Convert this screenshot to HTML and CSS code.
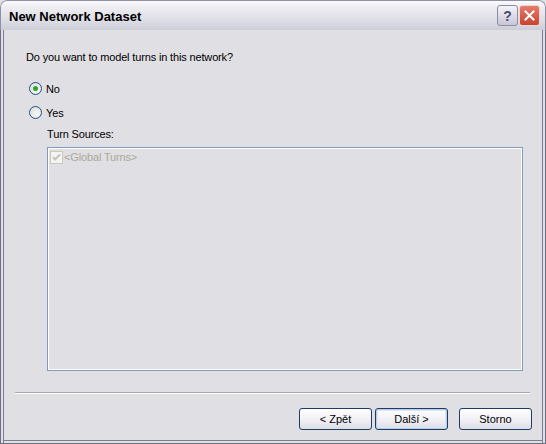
FILE: index.html
```html
<!DOCTYPE html>
<html lang="cs">
<head>
    <meta charset="UTF-8">
    <title>New Network Dataset</title>
    <link rel="stylesheet" href="styles.css">
</head>
<body>
    <div class="window">
        <div class="titlebar">
            <span class="title">New Network Dataset</span>
            <div class="caption-buttons">
                <span class="cap-btn help">?</span>
                <span class="cap-btn close">
                    <svg width="11" height="11" viewBox="0 0 11 11">
                        <path d="M1.5 1.5 L9.5 9.5 M9.5 1.5 L1.5 9.5" stroke="#fff" stroke-width="2" stroke-linecap="square"/>
                    </svg>
                </span>
            </div>
        </div>
        <div class="client">
            <p class="question">Do you want to model turns in this network?</p>

            <label class="radio"><span class="radio-box checked"></span>No</label>
            <label class="radio"><span class="radio-box"></span>Yes</label>

            <div class="sources">
                <div class="sources-label">Turn Sources:</div>
                <div class="listbox">
                    <div class="list-item">
                        <span class="check">
                            <svg width="11" height="11" viewBox="0 0 11 11">
                                <path d="M2 5 L4 7.5 L9 2.5" fill="none" stroke="#c6c4b8" stroke-width="2"/>
                            </svg>
                        </span>
                        &lt;Global Turns&gt;
                    </div>
                </div>
            </div>

            <div class="separator"></div>

            <div class="buttons">
                <button type="button" class="btn">&lt; Zpět</button>
                <button type="button" class="btn default">Další &gt;</button>
                <button type="button" class="btn cancel">Storno</button>
            </div>
        </div>
    </div>
</body>
</html>
```

FILE: styles.css
```css
html, body {
    margin: 0;
    padding: 0;
    background: #e0dfe3;
}
.window {
    width: 546px;
    height: 444px;
    box-sizing: border-box;
    display: flex;
    flex-direction: column;
    font-family: "Liberation Sans", Arial, sans-serif;
    font-size: 11px;
    letter-spacing: -0.15px;
    color: #000;
    border-radius: 7px 7px 0 0;
    overflow: hidden;
    background: #e0dfe3;
}
.titlebar {
    height: 30px;
    box-sizing: border-box;
    display: flex;
    align-items: flex-start;
    justify-content: space-between;
    padding: 0 5px 0 8px;
    border: 1px solid #8f8fa6;
    border-bottom: none;
    border-radius: 7px 7px 0 0;
    background: linear-gradient(#fbfbfd, #ececf1 25%, #dcdce4 70%, #cdcdd8);
}
.title {
    margin-top: 8px;
    font-weight: bold;
    font-size: 13px;
    letter-spacing: 0;
    color: #000;
}
.caption-buttons {
    display: flex;
    gap: 1px;
    margin-top: 4px;
}
.cap-btn {
    width: 21px;
    height: 21px;
    box-sizing: border-box;
    border-radius: 3px;
    display: flex;
    align-items: center;
    justify-content: center;
}
.help {
    border: 1px solid #8c8ca4;
    background: linear-gradient(#f4f4f8, #c6c6d8);
    color: #4a4a68;
    font-size: 14px;
    font-weight: bold;
}
.close {
    border: 1px solid #f0d4cf;
    background: linear-gradient(#e77b6c, #c8432f);
}
.client {
    flex: 1;
    display: flex;
    flex-direction: column;
    border-left: 1px solid #6d6d88;
    border-right: 1px solid #6d6d88;
    border-bottom: 1px solid #6d6d88;
    box-shadow: inset 2px 0 0 #e0dfe3, inset 3px 0 0 #7c7c96,
                inset -2px 0 0 #e0dfe3, inset -3px 0 0 #7c7c96,
                inset 0 -2px 0 #e0dfe3, inset 0 -3px 0 #7c7c96;
    padding: 21px 3px 3px 25px;
}
.question {
    margin: 0 0 18px;
    line-height: 13px;
}
.radio {
    display: flex;
    align-items: center;
    gap: 4px;
    height: 13px;
    margin: 0 0 11px 3px;
}
.radio-box {
    width: 13px;
    height: 13px;
    box-sizing: border-box;
    border: 1px solid #1c5180;
    border-radius: 50%;
    background: radial-gradient(circle at 65% 65%, #f6f6f6, #dcdcd6);
    display: flex;
    align-items: center;
    justify-content: center;
}
.radio-box.checked::after {
    content: "";
    width: 5px;
    height: 5px;
    border-radius: 50%;
    background: #2fa52f;
}
.sources {
    margin-left: 21px;
    margin-right: 19px;
}
.sources-label {
    line-height: 13px;
    margin-top: -2px;
    margin-bottom: 6px;
}
.listbox {
    height: 224px;
    box-sizing: border-box;
    border: 1px solid #7f9db9;
    box-shadow: inset 0 0 0 1px #ffffff;
    padding: 3px 2px;
}
.list-item {
    display: flex;
    align-items: center;
    gap: 1px;
    color: #aca899;
    line-height: 13px;
}
.check {
    width: 13px;
    height: 13px;
    box-sizing: border-box;
    border: 1px solid #cac8bb;
    background: #f4f4f4;
    display: flex;
    align-items: center;
    justify-content: center;
}
.separator {
    margin: 21px 12px 0 -11px;
    border-top: 1px solid #a6a6b4;
    border-bottom: 1px solid #ffffff;
}
.buttons {
    display: flex;
    margin-top: 14px;
    padding-left: 273px;
}
.btn {
    width: 73px;
    height: 22px;
    box-sizing: border-box;
    margin-right: 3px;
    border: 1px solid #1e3c64;
    border-radius: 3px;
    background: linear-gradient(#ffffff, #f2f2f6 50%, #dcdce6);
    font-family: "Liberation Sans", Arial, sans-serif;
    font-size: 11px;
    color: #000;
    padding: 0;
}
.btn.default {
    box-shadow: inset 0 0 0 1px #b8cbe8, inset 0 0 0 2px #dce6f4;
}
.btn.cancel {
    margin-left: 8px;
}
```
